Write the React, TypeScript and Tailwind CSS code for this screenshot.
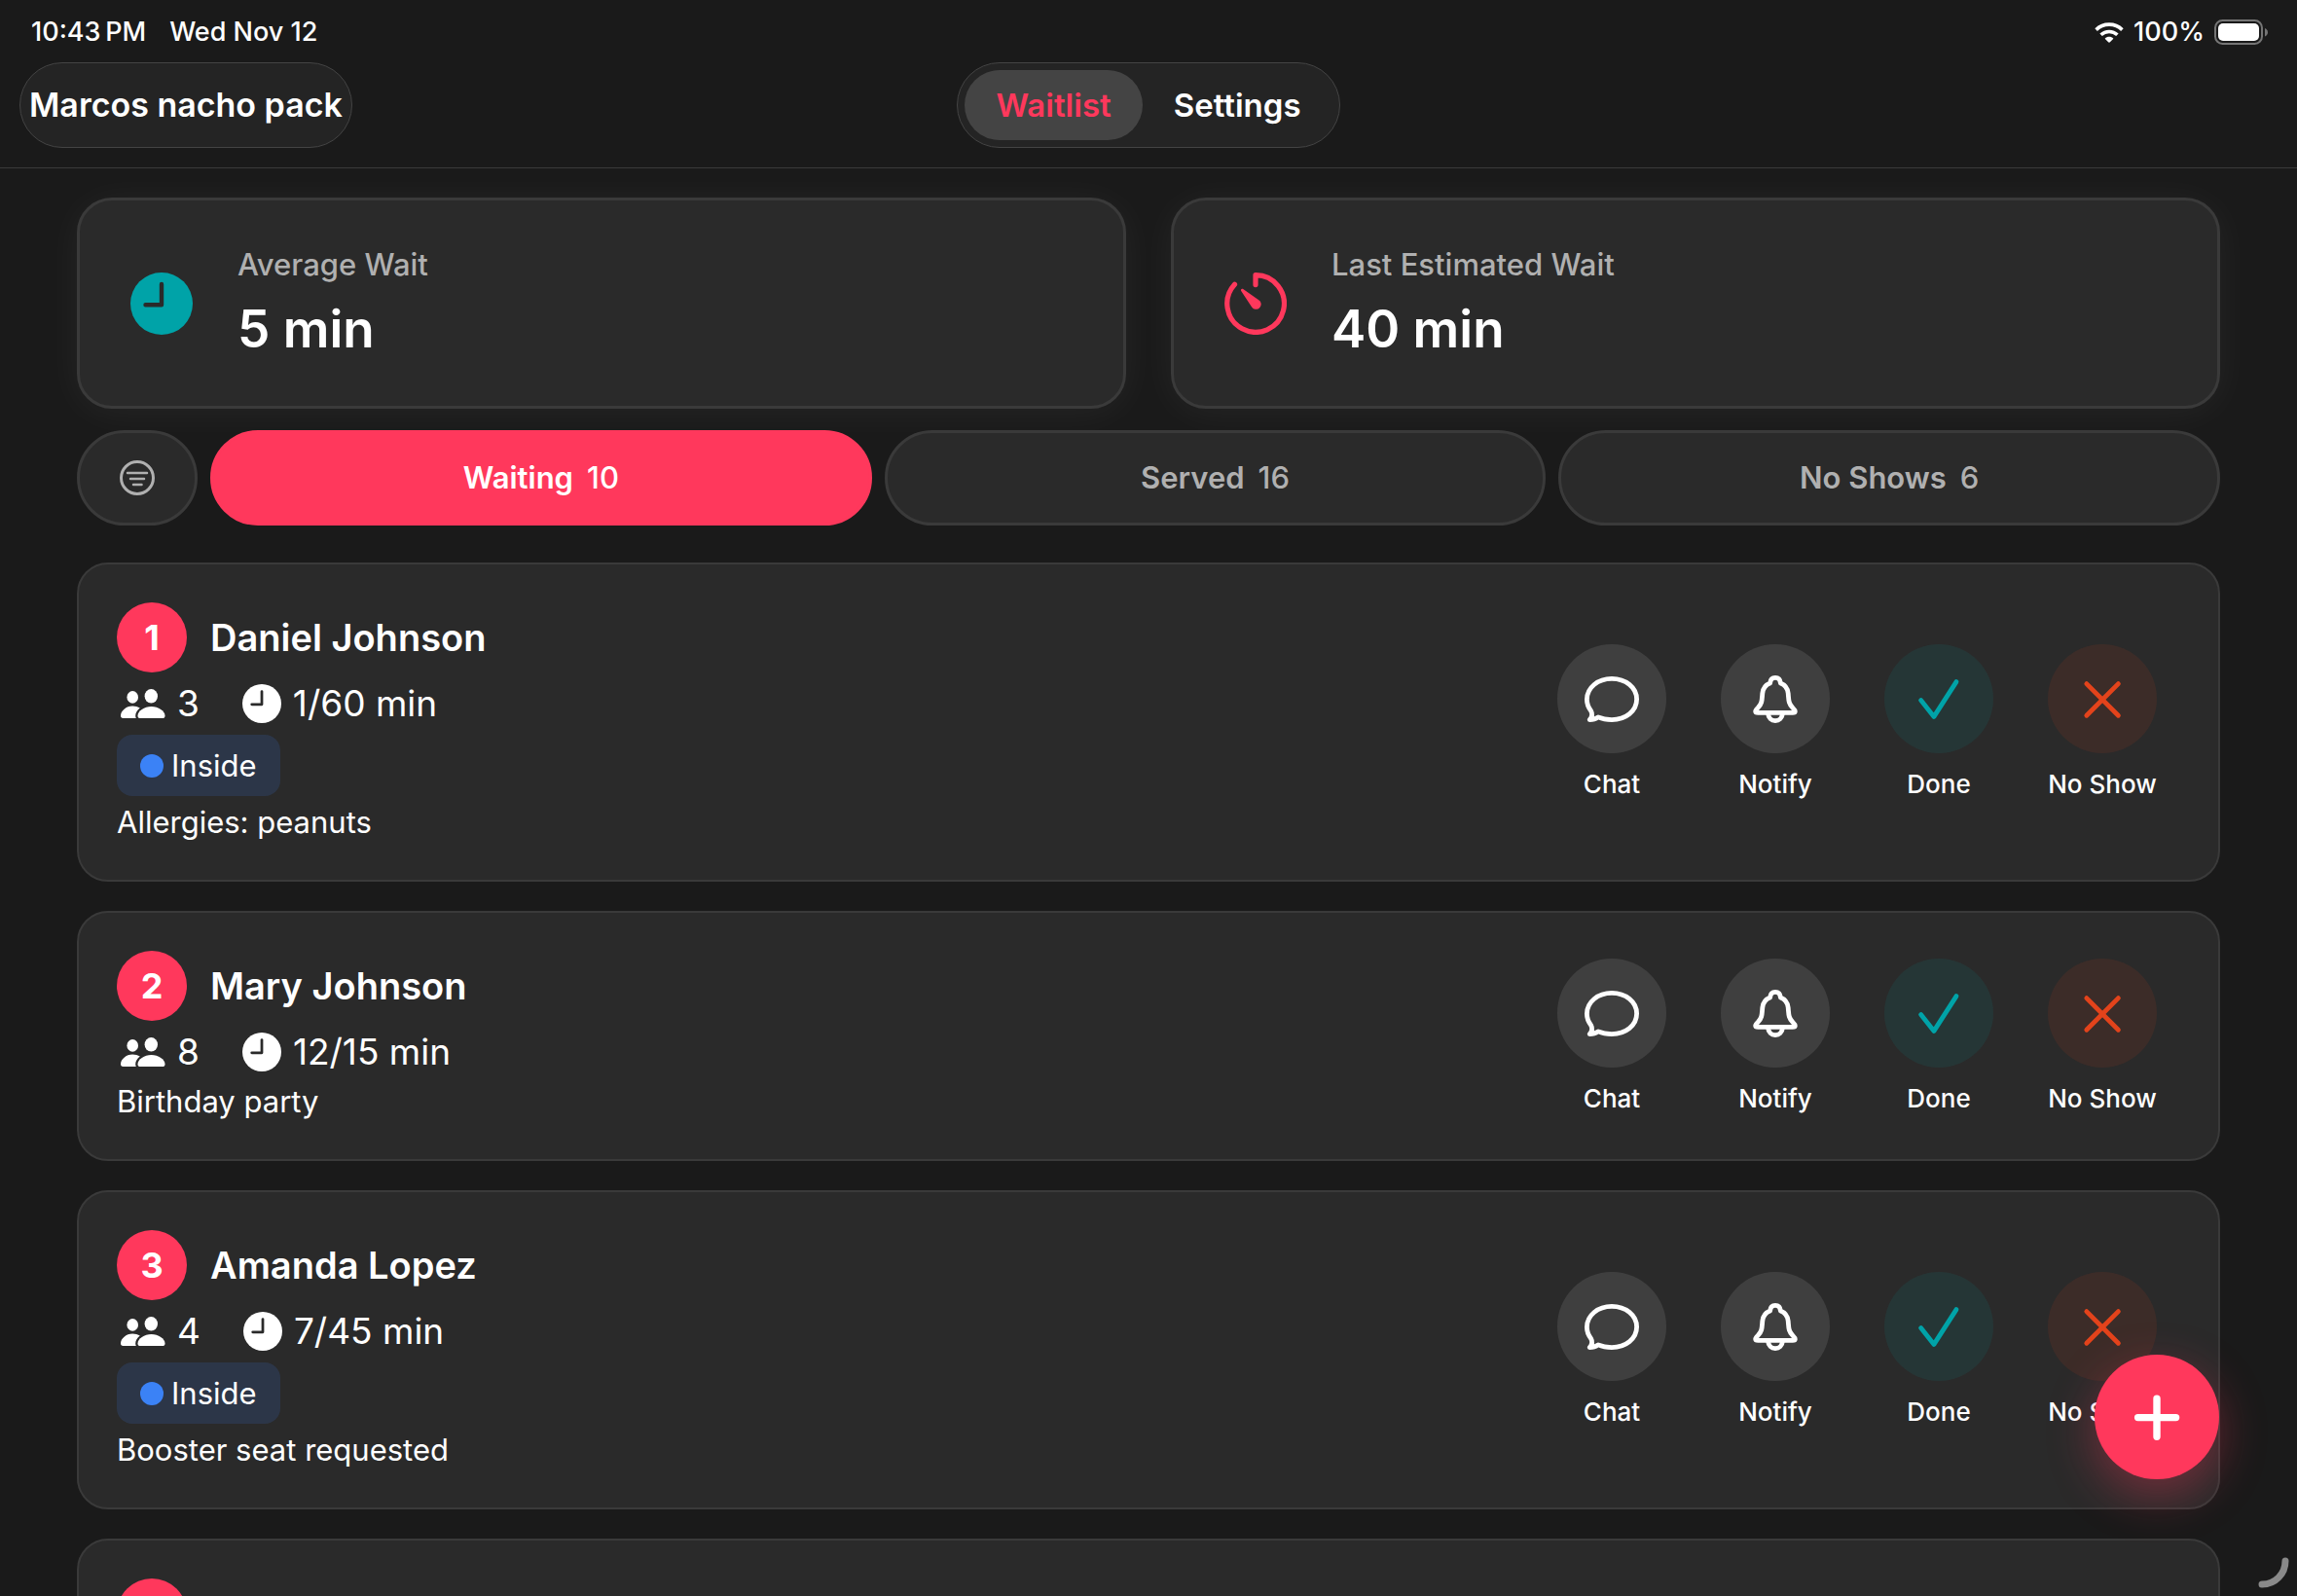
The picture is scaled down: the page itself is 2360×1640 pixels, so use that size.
import { useState } from 'react';
import type { ReactNode } from 'react';
import clsx from 'clsx';

type Guest = {
  id: number;
  name: string;
  partySize: number;
  wait: string;
  inside?: boolean;
  note: string;
};

const GUESTS: Guest[] = [
  { id: 1, name: 'Daniel Johnson', partySize: 3, wait: '1/60 min', inside: true, note: 'Allergies: peanuts' },
  { id: 2, name: 'Mary Johnson', partySize: 8, wait: '12/15 min', note: 'Birthday party' },
  { id: 3, name: 'Amanda Lopez', partySize: 4, wait: '7/45 min', inside: true, note: 'Booster seat requested' },
  { id: 4, name: 'Chris Miller', partySize: 2, wait: '5/30 min', inside: true, note: 'Window table' },
];

const FILTERS = [
  { key: 'waiting', label: 'Waiting', count: 10 },
  { key: 'served', label: 'Served', count: 16 },
  { key: 'noshow', label: 'No Shows', count: 6 },
];

function ClockIcon({ className, hands }: { className: string; hands: string }) {
  return (
    <svg viewBox="0 0 64 64" className={className} aria-hidden="true">
      <circle cx="32" cy="32" r="32" fill="currentColor" />
      <path d="M32 12v21.3H15.5" fill="none" stroke={hands} strokeWidth="4.4" strokeLinecap="round" strokeLinejoin="round" />
    </svg>
  );
}

function TimerIcon() {
  return (
    <svg viewBox="0 0 64 64" className="size-16 text-[#ff385c]" aria-hidden="true">
      <path
        d="M32 12.6V2.7A29.3 29.3 0 1 1 10.5 12.2"
        fill="none"
        stroke="currentColor"
        strokeWidth="5.2"
        strokeLinecap="round"
        strokeLinejoin="round"
      />
      <path d="M19.2 17.1 35.2 28.2A5.2 5.2 0 1 1 28.1 35.4L17.2 19.1C16.3 17.7 17.8 16.2 19.2 17.1Z" fill="currentColor" />
    </svg>
  );
}

function FilterIcon() {
  return (
    <svg viewBox="0 0 36 36" className="size-9" fill="none" stroke="currentColor" strokeLinecap="round" aria-hidden="true">
      <circle cx="18" cy="18" r="16.5" strokeWidth="3" />
      <path d="M8 13h20M11 19h14M14 25h8.5" strokeWidth="2.5" />
    </svg>
  );
}

function PeopleIcon() {
  return (
    <svg viewBox="0 0 46 30" className="h-[30px] w-[46px]" fill="currentColor" aria-hidden="true">
      <ellipse cx="31.3" cy="7.3" rx="6.7" ry="7.3" />
      <path d="M31.5 18C38.6 18 45.5 22.6 45.5 27.4 45.5 29.2 44.6 30 42.6 30H20.4C18.4 30 17.5 29.2 17.5 27.4 17.5 22.6 24.4 18 31.5 18Z" />
      <ellipse cx="12.2" cy="8.4" rx="5.8" ry="6.3" />
      <path d="M12.2 17.6C15 17.6 17.7 18.3 19.8 19.6 17 21.8 15.2 24.6 15.2 27.6 15.2 28.5 15.4 29.3 15.8 30H2.5C.8 30 0 29.2 0 27.6 0 22.6 5.6 17.6 12.2 17.6Z" />
    </svg>
  );
}

function WifiIcon() {
  return (
    <svg viewBox="0 0 30 21" className="h-[21px] w-[30px]" fill="none" stroke="currentColor" strokeWidth="3.6" aria-hidden="true">
      <path d="M1.6 7.6C9 .3 21 .3 28.4 7.6" />
      <path d="M6.6 12.8C11.3 8.3 18.7 8.3 23.4 12.8" />
      <path d="M10.6 16.8C13 14.2 17 14.2 19.4 16.8L15.9 20.3C15.4 20.8 14.6 20.8 14.1 20.3Z" fill="currentColor" stroke="none" />
    </svg>
  );
}

function BatteryIcon() {
  return (
    <svg viewBox="0 0 55 26" className="h-[26px] w-[55px]" aria-hidden="true">
      <rect x="1" y="1" width="48" height="24" rx="7.5" fill="none" stroke="#757575" strokeWidth="2" />
      <rect x="4" y="4" width="42" height="18" rx="5" fill="#fff" />
      <path d="M52 9v8.4C53.9 16.8 55 15 55 13.2S53.9 9.6 52 9Z" fill="#757575" />
    </svg>
  );
}

/* Action glyphs share the 112 unit box of the round button they sit in */
function Glyph({ children }: { children: ReactNode }) {
  return (
    <svg
      viewBox="0 0 112 112"
      className="size-28"
      fill="none"
      stroke="currentColor"
      strokeWidth="4.8"
      strokeLinecap="round"
      strokeLinejoin="round"
      aria-hidden="true"
    >
      {children}
    </svg>
  );
}

const ACTIONS = [
  {
    label: 'Chat',
    tone: 'bg-white/10 text-white',
    glyph: (
      <path d="M34.6 68.4C31.9 65 30.4 61.2 30.4 56.8 30.4 44.5 41.8 35.4 56 35.4S81.6 44.5 81.6 56.6 70.2 77.6 56 77.6C50.6 77.6 46 76.7 42 74.9 39.7 76.6 36.8 77.6 33.2 77.6 35.8 74.9 36.2 71.4 34.6 68.4Z" />
    ),
  },
  {
    label: 'Notify',
    tone: 'bg-white/10 text-white',
    glyph: (
      <>
        <path d="M56 34.4C52.6 34.4 50.9 36.7 50.6 40 46 41.8 43.3 45.6 42.8 50.4 42.2 57 42.6 61.2 38 65.4 34.7 68.5 35 70.4 38.2 70.4H73.8C77 70.4 77.3 68.5 74 65.4 69.4 61.2 69.8 57 69.2 50.4 68.7 45.6 66 41.8 61.4 40 61.1 36.7 59.4 34.4 56 34.4Z" />
        <path d="M48.6 71.4C48.9 75.7 52 78.6 56 78.6S63.1 75.7 63.4 71.4" />
      </>
    ),
  },
  {
    label: 'Done',
    tone: 'bg-[#00a3a8]/10 text-[#00a3a8]',
    glyph: <path d="M37.6 57.6 51 74.4 74 38.6" />,
  },
  {
    label: 'No Show',
    tone: 'bg-[#e3431b]/10 text-[#e3431b]',
    glyph: <path d="M39.8 40.6 72.4 73.2M72.4 40.6 39.8 73.2" />,
  },
];

function StatCard({ icon, label, value }: { icon: ReactNode; label: string; value: string }) {
  return (
    <div className="flex flex-1 items-center gap-[46px] rounded-[36px] border-3 border-[#3a3a3a] bg-[#2a2a2a] px-[52px] py-[47px] shadow-[0_4px_40px_rgba(255,255,255,0.05)]">
      {icon}
      <div className="flex flex-col gap-4">
        <span className="text-[31px] leading-[37px] font-medium text-[#b0b0b0]">{label}</span>
        <span className="text-[53px] leading-[64px] font-semibold">{value}</span>
      </div>
    </div>
  );
}

function GuestCard({ guest }: { guest: Guest }) {
  return (
    <li className="flex shrink-0 items-center justify-between rounded-[32px] border-2 border-[#3a3a3a] bg-[#2a2a2a] py-[39px] pr-[63px] pl-[39px]">
      <div className="flex flex-col items-start gap-2">
        <div className="flex items-center gap-6">
          <span className="flex size-18 items-center justify-center rounded-full bg-[#ff385c] text-[36px] font-bold">
            {guest.id}
          </span>
          <h2 className="text-[38px] leading-[48px] font-semibold">{guest.name}</h2>
        </div>
        <div className="flex h-12 items-center gap-11 text-[37px] leading-[48px]">
          <span className="flex items-center gap-3 pl-1">
            <PeopleIcon />
            {guest.partySize}
          </span>
          <span className="flex items-center gap-3">
            <ClockIcon className="size-10" hands="#2a2a2a" />
            {guest.wait}
          </span>
        </div>
        {guest.inside && (
          <span className="flex h-[63px] items-center gap-2 rounded-2xl bg-[#3b82f6]/15 px-6 text-[31px] leading-[37px]">
            <span className="size-6 rounded-full bg-[#3b82f6]" />
            Inside
          </span>
        )}
        <p className="pb-0.5 text-[31px] leading-[37px]">{guest.note}</p>
      </div>

      <div className="flex gap-14">
        {ACTIONS.map((a) => (
          <button key={a.label} type="button" className="flex w-28 flex-col items-center gap-4">
            <span className={clsx('size-28 rounded-full', a.tone)}>
              <Glyph>{a.glyph}</Glyph>
            </span>
            <span className="text-[26px] leading-8 font-medium whitespace-nowrap">{a.label}</span>
          </button>
        ))}
      </div>
    </li>
  );
}

export default function App() {
  const [tab, setTab] = useState('Waitlist');
  const [filter, setFilter] = useState('waiting');

  return (
    <div className="flex h-screen flex-col overflow-hidden bg-[#1a1a1a] font-[Inter,sans-serif] text-white">
      <header className="shrink-0 border-b border-[#3a3a3a]">
        {/* Status bar */}
        <div className="flex h-16 items-center justify-between pt-0.5 pr-[30px] pl-8 text-[27px] leading-8 font-medium">
          <div className="flex gap-6">
            <span>{'10:43\u2009PM'}</span>
            <span>Wed Nov 12</span>
          </div>
          <div className="flex items-center gap-2.5">
            <WifiIcon />
            <span>100%</span>
            <BatteryIcon />
          </div>
        </div>

        <nav className="grid grid-cols-[1fr_auto_1fr] items-center px-5 pb-5 leading-10 font-semibold">
          <div className="flex h-22 items-center justify-self-start rounded-full border border-[#444] bg-[#242424] px-[9px] text-[34px]">
            Marcos nacho pack
          </div>
          <div className="flex h-22 items-center rounded-full border border-[#444] bg-[#242424] p-[7px] text-[33px]">
            {['Waitlist', 'Settings'].map((t) => (
              <button
                key={t}
                type="button"
                onClick={() => setTab(t)}
                className={clsx('h-18 rounded-full px-8', tab === t && 'bg-[#444] text-[#ff385c]')}
              >
                {t}
              </button>
            ))}
          </div>
        </nav>
      </header>

      <main className="flex min-h-0 flex-1 flex-col px-[79px] pt-[30px]">
        <section className="flex shrink-0 gap-[46px]">
          <StatCard icon={<ClockIcon className="size-16 text-[#00a3a8]" hands="#2a2a2a" />} label="Average Wait" value="5 min" />
          <StatCard icon={<TimerIcon />} label="Last Estimated Wait" value="40 min" />
        </section>

        <div className="mt-[22px] flex h-[98px] shrink-0 gap-[13px] text-[31px] leading-[37px]">
          <button
            type="button"
            aria-label="Filter"
            className="flex w-[124px] items-center justify-center rounded-full border-3 border-[#3a3a3a] bg-[#2a2a2a] text-[#b0b0b0]"
          >
            <FilterIcon />
          </button>
          {FILTERS.map((f) => (
            <button
              key={f.key}
              type="button"
              onClick={() => setFilter(f.key)}
              className={clsx(
                'flex flex-1 items-center justify-center gap-3.5 rounded-full border-3 pb-0.5 font-semibold',
                filter === f.key ? 'border-[#ff385c] bg-[#ff385c] text-white' : 'border-[#3a3a3a] bg-[#2a2a2a] text-[#b0b0b0]'
              )}
            >
              <span>{f.label}</span>
              <span className="font-medium">{f.count}</span>
            </button>
          ))}
        </div>

        <ul className="mt-[38px] flex min-h-0 flex-1 flex-col gap-[30px] overflow-y-auto [scrollbar-width:none]">
          {GUESTS.map((g) => (
            <GuestCard key={g.id} guest={g} />
          ))}
        </ul>
      </main>

      <button
        type="button"
        aria-label="Add party"
        className="fixed right-20 bottom-30 size-32 rounded-full bg-[#ff385c] shadow-[0_16px_48px_rgba(255,56,92,0.35)]"
      >
        <svg viewBox="0 0 128 128" className="size-32" stroke="currentColor" strokeWidth="7.4" strokeLinecap="round" aria-hidden="true">
          <path d="M44.6 64.6h39M64 45.2v39" />
        </svg>
      </button>

      {/* Window resize handle */}
      <svg viewBox="0 0 32 32" className="fixed right-2 bottom-2 size-8" fill="none" stroke="#8a8a8a" strokeWidth="7" strokeLinecap="round" aria-hidden="true">
        <path d="M28 4C28 17 18 28 4 28" />
      </svg>
    </div>
  );
}
